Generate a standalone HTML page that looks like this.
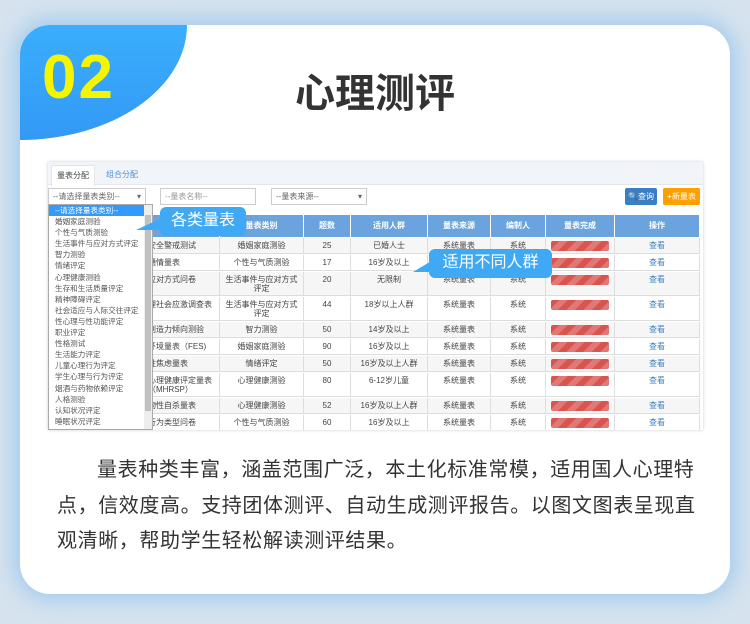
<!DOCTYPE html>
<html><head><meta charset="utf-8"><style>
*{margin:0;padding:0;box-sizing:border-box}
body{width:750px;height:624px;background:#d6e3ee;position:relative;overflow:hidden;font-family:"Liberation Sans","Noto Sans CJK SC",sans-serif}
.card{position:absolute;left:20px;top:25px;width:710px;height:569px;background:#fff;border-radius:30px;box-shadow:0 0 22px 6px #a3cbee;overflow:hidden}
.blob{position:absolute;left:0;top:0;width:167px;height:115px;background:linear-gradient(#3aaefc,#3399f5);border-bottom-right-radius:100% 100%}
.num{position:absolute;left:22px;top:17px;font:bold 62px "Liberation Sans",sans-serif;color:#f5f500;letter-spacing:2px}
.title{position:absolute;left:0;width:710px;top:36px;text-align:center;font-size:40px;font-weight:bold;color:#333;letter-spacing:0}
.panel{position:absolute;left:28px;top:137px;width:655px;height:268px;background:#fff;box-shadow:0 0 3px #ccc;overflow:hidden;font-size:8px;color:#444}
.a{position:absolute}
.tabs{left:0;top:0;width:655px;height:23px;background:#f1f4f8;border-bottom:1px solid #e3e6ea}
.tab1{left:3px;top:3px;width:44px;height:21px;background:#fff;border:1px solid #e3e6ea;border-bottom:none;text-align:center;line-height:20px}
.sel{height:17px;border:1px solid #ccc;background:#fff;line-height:15px;padding-left:4px;color:#666}
.hdr{background:#6aa3dd;color:#fff;font-weight:bold;text-align:center}
.c{position:absolute;text-align:center;border-right:1px solid #fff;}
.bar{position:absolute;height:10px;border-radius:2px;background:repeating-linear-gradient(135deg,#d9534f 0 6px,#e07975 6px 12px)}
.drop{left:0;top:42px;width:105px;height:226px;background:#fff;border:1px solid #aaa;font-size:7.6px;color:#555}
.drop div{height:11.1px;line-height:11.1px;padding-left:6px;white-space:nowrap;overflow:hidden}
.bub{position:absolute;background:#3fa9f5;color:#fff;border-radius:6px;font-size:16px;text-align:center}
.p{position:absolute;left:37px;top:428px;width:650px;font-size:20px;line-height:35.5px;color:#333;text-indent:40px;letter-spacing:0.6px}
</style></head><body>
<div class="card">
<div class="blob"></div>
<div class="num">02</div>
<div class="title">心理测评</div>
<div class="panel">
<div class="a tabs"></div>
<div class="a tab1">量表分配</div>
<div class="a" style="left:58px;top:7px;color:#4a90d9">组合分配</div>
<div class="a sel" style="left:0;top:26px;width:98px">--请选择量表类别--<span style="float:right;margin-right:4px">▾</span></div>
<div class="a sel" style="left:112px;top:26px;width:96px;color:#999">--量表名称--</div>
<div class="a sel" style="left:223px;top:26px;width:96px">--量表来源--<span style="float:right;margin-right:4px">▾</span></div>
<div class="a" style="left:577px;top:26px;width:32px;height:17px;background:#3a7fc4;color:#fff;text-align:center;line-height:17px;border-radius:2px">🔍查询</div>
<div class="a" style="left:615px;top:26px;width:37px;height:17px;background:#ff9f00;color:#fff;text-align:center;line-height:17px;border-radius:2px">+新量表</div>
<div class="a hdr" style="left:100px;top:53px;width:552px;height:22px"></div>
<div id="t"></div>
<div class="a drop">
<div style="background:#3399ff;color:#fff">--请选择量表类别--</div>
<div>婚姻家庭测验</div><div>个性与气质测验</div><div>生活事件与应对方式评定</div><div>智力测验</div><div>情绪评定</div><div>心理健康测验</div><div>生存和生活质量评定</div><div>精神障碍评定</div><div>社会适应与人际交往评定</div><div>性心理与性功能评定</div><div>职业评定</div><div>性格测试</div><div>生活能力评定</div><div>儿童心理行为评定</div><div>学生心理与行为评定</div><div>烟酒与药物依赖评定</div><div>人格测验</div><div>认知状况评定</div><div>睡眠状况评定</div>
<span class="a" style="right:0;top:0;width:8px;height:224px;background:#eee"></span>
<span class="a" style="right:1px;top:10px;width:6px;height:196px;background:#c1c1c1"></span>
</div>
</div>
<div class="bub" style="left:140px;top:182px;width:86px;height:29px;line-height:28px">各类量表</div>
<div class="a" style="left:116px;top:192px;width:0;height:0;border-top:13px solid transparent;border-right:28px solid #3fa9f5"></div>
<div class="bub" style="left:409px;top:224px;width:123px;height:29px;line-height:28px">适用不同人群</div>
<div class="a" style="left:393px;top:235px;width:0;height:0;border-top:12px solid transparent;border-right:20px solid #3fa9f5"></div>
<div class="p">量表种类丰富，涵盖范围广泛，本土化标准常模，适用国人心理特点，信效度高。支持团体测评、自动生成测评报告。以图文图表呈现直观清晰，帮助学生轻松解读测评结果。</div>
</div>
<script>
var cols=[[100,72],[172,84],[256,47],[303,77],[380,63],[443,55],[498,69],[567,85]];
var hd=['量表名称','量表类别','题数','适用人群','量表来源','编制人','量表完成','操作'];
var rows=[['安全警戒测试','婚姻家庭测验','25','已婚人士',16],['通情量表','个性与气质测验','17','16岁及以上',16],['应对方式问卷','生活事件与应对方式<br>评定','20','无限制',24],['理社会应激调查表','生活事件与应对方式<br>评定','44','18岁以上人群',24],['创造力倾向测验','智力测验','50','14岁及以上',16],['环境量表（FES)','婚姻家庭测验','90','16岁及以上',16],['性焦虑量表','情绪评定','50','16岁及以上人群',16],['心理健康评定量表<br>（MHRSP）','心理健康测验','80','6-12岁儿童',24],['物性自杀量表','心理健康测验','52','16岁及以上人群',16],['行为类型问卷','个性与气质测验','60','16岁及以上',16]];
var h='';
for(var i=0;i<8;i++)h+='<div class="c" style="left:'+cols[i][0]+'px;top:53px;width:'+cols[i][1]+'px;height:22px;line-height:22px;color:#fff;font-weight:bold">'+hd[i]+'</div>';
var y=76;
rows.forEach(function(r,k){var H=r[4];var bg=k%2==0?'#f6f6f6':'#fff';
h+='<div class="a" style="left:100px;top:'+y+'px;width:552px;height:'+H+'px;background:'+bg+';border-bottom:1px solid #ddd"></div>';
var v=[r[0],r[1],r[2],r[3],'系统量表','系统','',''];
for(var i=0;i<8;i++){var st='left:'+cols[i][0]+'px;width:'+cols[i][1]+'px;height:'+H+'px;line-height:9px;border-right:1px solid #ddd;top:'+y+'px;padding-top:3px;';
if(i==0)st+='text-align:left;';
if(i==7)v[i]='<span style="color:#3a7fc4">查看</span>';
h+='<div class="c" style="'+st+'">'+v[i]+'</div>';}
h+='<div class="bar" style="left:'+(cols[6][0]+5)+'px;top:'+(y+3)+'px;width:58px"></div>';
y+=H+1;});
document.getElementById('t').innerHTML=h;
</script>
</body></html>
